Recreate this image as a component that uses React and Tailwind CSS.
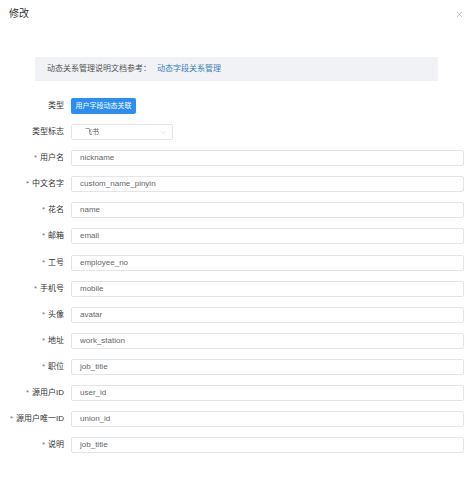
import { ChevronDown, X } from "lucide-react";

const FIELDS = [
  ["用户名", "nickname"],
  ["中文名字", "custom_name_pinyin"],
  ["花名", "name"],
  ["邮箱", "email"],
  ["工号", "employee_no"],
  ["手机号", "mobile"],
  ["头像", "avatar"],
  ["地址", "work_station"],
  ["职位", "job_title"],
  ["源用户ID", "user_id"],
  ["源用户唯一ID", "union_id"],
  ["说明", "job_title"],
];

function Row({ label, required, children }) {
  return (
    <div className="flex h-[16px] items-center">
      <div className="w-[64px] shrink-0 whitespace-nowrap text-right text-[8px] leading-none text-[#333]">
        {required ? <span className="mr-[3px] text-[#777]">*</span> : null}
        {label}
      </div>
      <div className="ml-[7px] flex min-w-0 flex-1 items-center">{children}</div>
    </div>
  );
}

export default function App() {
  return (
    <div
      className="h-[480px] w-[474px] overflow-hidden bg-white"
      style={{ fontFamily: '"Liberation Sans", "Noto Sans CJK SC", sans-serif' }}
    >
      <div className="flex items-center justify-between pl-[9px] pr-[10px] pt-[8px]">
        <span className="text-[10px] leading-[12px] text-[#333]">修改</span>
        <X className="h-[9px] w-[9px] text-[#999]" strokeWidth={1.5} />
      </div>

      <div className="ml-[35px] mr-[36px] mt-[37px] flex h-[24px] items-center bg-[#f0f2f5] pl-[12px] text-[8px]">
        <span className="text-[#555]">动态关系管理说明文档参考：</span>
        <span className="ml-[6px] text-[#3a80b8]">动态字段关系管理</span>
      </div>

      <div className="mr-[10px] mt-[17px] flex flex-col gap-[10.1px]">
        <Row label="类型">
          <div className="flex h-[16px] w-[65px] items-center justify-center rounded-[2px] bg-[#2b8ef0] text-[7px] text-white">
            用户字段动态关联
          </div>
        </Row>
        <Row label="类型标志">
          <div className="flex h-[16px] w-[102px] items-center justify-between rounded-[2px] border border-[#e2e4e8] pl-[13px] pr-[5px] text-[7px] text-[#555]">
            <span>飞书</span>
            <ChevronDown className="h-[7px] w-[7px] text-[#bbb]" strokeWidth={1.5} />
          </div>
        </Row>
        {FIELDS.map(([label, value]) => (
          <Row key={label} label={label} required>
            <div className="flex h-[16px] w-full items-center rounded-[2px] border border-[#e2e4e8] pl-[8px] text-[8px] text-[#666]">
              {value}
            </div>
          </Row>
        ))}
      </div>
    </div>
  );
}
